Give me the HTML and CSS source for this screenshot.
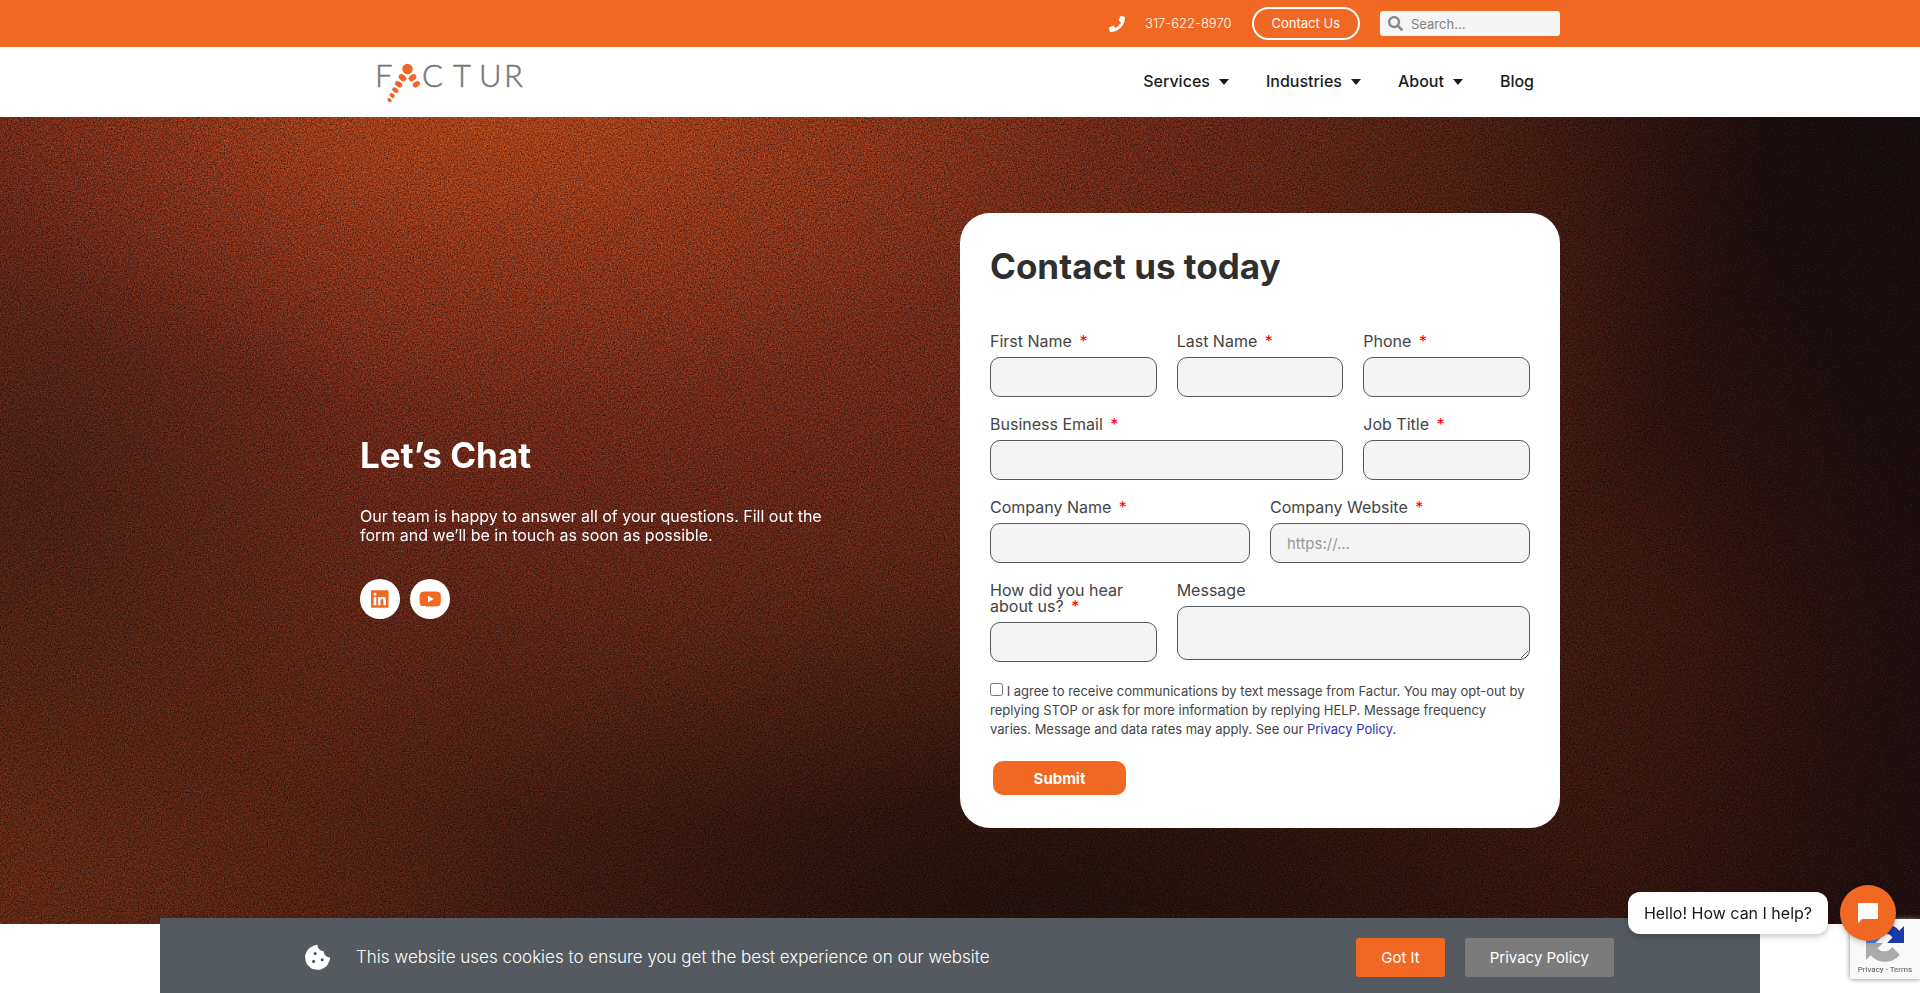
FILE: index.html
```html
<!DOCTYPE html>
<html lang="en">
<head>
<meta charset="utf-8">
<meta name="viewport" content="width=device-width, initial-scale=1">
<title>Contact Us - Factur</title>
<link rel="stylesheet" href="styles.css">
</head>
<body>
<div class="topbar">
  <div class="container topbar-inner">
    <a class="phone" href="tel:3176228970">
      <svg class="phone-icon" viewBox="0 0 512 512" aria-hidden="true"><path fill="currentColor" d="M493.4 24.6l-104-24c-11.3-2.6-22.9 3.3-27.5 13.9l-48 112c-4.2 9.8-1.4 21.3 6.9 28l60.6 49.6c-36 76.7-98.9 140.5-177.2 177.2l-49.6-60.6c-6.8-8.3-18.2-11.1-28-6.9l-112 48C3.9 366.5-2 378.1.6 389.4l24 104C27.1 504.2 36.7 512 48 512c256.1 0 464-207.5 464-464 0-11.2-7.7-20.9-18.6-23.4z"/></svg>
      <span>317-622-8970</span>
    </a>
    <a class="contact-btn" href="#contact">Contact Us</a>
    <form class="search" role="search">
      <svg class="search-icon" viewBox="0 0 512 512" aria-hidden="true"><path fill="currentColor" d="M505 442.7L405.3 343c-4.5-4.5-10.6-7-17-7H372c27.6-35.3 44-79.7 44-128C416 93.1 322.9 0 208 0S0 93.1 0 208s93.1 208 208 208c48.3 0 92.7-16.4 128-44v16.300c0 6.400 2.500 12.500 7 17l99.700 99.700c9.400 9.400 24.600 9.400 33.900 0l28.300-28.300c9.400-9.400 9.400-24.600.1-34zM208 336c-70.700 0-128-57.200-128-128 0-70.700 57.200-128 128-128 70.700 0 128 57.200 128 128 0 70.700-57.200 128-128 128z"/></svg>
      <input class="search-input" type="search" placeholder="Search..." aria-label="Search">
    </form>
  </div>
</div>

<header class="header">
  <div class="container header-inner">
    <a class="logo" href="#" aria-label="Factur">
      <svg class="logo-svg" viewBox="0 0 148 42">
        <text class="logo-text" x="-2 45 76 102 127" y="26">FCTUR</text>
        <g fill="#f06724">
          <circle cx="30.500" cy="8" r="5.200"/>
          <ellipse cx="25.500" cy="16.700" rx="4.200" ry="3" transform="rotate(35 25.500 16.700)"/>
          <ellipse cx="35.500" cy="16.700" rx="4.200" ry="3" transform="rotate(-35 35.500 16.700)"/>
          <ellipse cx="21.600" cy="23.300" rx="3.900" ry="2.700" transform="rotate(35 21.600 23.300)"/>
          <ellipse cx="39.400" cy="23.300" rx="3.900" ry="2.700" transform="rotate(-35 39.400 23.300)"/>
          <ellipse cx="18.300" cy="29.200" rx="3.400" ry="2.300" transform="rotate(35 18.300 29.200)"/>
          <ellipse cx="15.200" cy="34.500" rx="2.900" ry="2" transform="rotate(35 15.200 34.500)"/>
          <ellipse cx="12.500" cy="39.200" rx="2.400" ry="1.700" transform="rotate(35 12.500 39.200)"/>
        </g>
      </svg>
    </a>
    <nav class="nav">
      <a href="#">Services<span class="caret"></span></a>
      <a href="#">Industries<span class="caret"></span></a>
      <a href="#">About<span class="caret"></span></a>
      <a href="#">Blog</a>
    </nav>
  </div>
</header>

<main class="hero">
  <svg class="grain" aria-hidden="true">
    <filter id="grain" x="0" y="0" width="100%" height="100%" color-interpolation-filters="sRGB">
      <feTurbulence type="fractalNoise" baseFrequency="0.7" numOctaves="2" seed="4"/>
      <feColorMatrix type="matrix" values=".6 .6 0 0 -.06  .6 .6 0 0 -.06  .6 .6 0 0 -.06  0 0 0 0 1"/>
    </filter>
    <rect width="100%" height="100%" filter="url(#grain)"/>
  </svg>
  <div class="container hero-inner">
    <section class="intro">
      <h2>Let’s Chat</h2>
      <p>Our team is happy to answer all of your questions. Fill out the form and we’ll be in touch as soon as possible.</p>
      <div class="socials">
        <a href="#" aria-label="LinkedIn"><svg viewBox="0 0 448 512"><path fill="currentColor" d="M416 32H31.900C14.300 32 0 46.500 0 64.300v383.400C0 465.500 14.300 480 31.900 480H416c17.600 0 32-14.500 32-32.300V64.300c0-17.800-14.400-32.300-32-32.300zM135.400 416H69V202.200h66.500V416zm-33.200-243c-21.300 0-38.500-17.300-38.500-38.500S80.900 96 102.200 96c21.200 0 38.500 17.300 38.500 38.500 0 21.300-17.200 38.500-38.500 38.500zm282.100 243h-66.400V312c0-24.800-.5-56.700-34.500-56.700-34.600 0-39.900 27-39.900 54.900V416h-66.400V202.200h63.700v29.200h.9c8.900-16.800 30.600-34.500 62.900-34.500 67.200 0 79.700 44.300 79.700 101.900V416z"/></svg></a>
        <a href="#" aria-label="YouTube"><svg viewBox="0 0 576 512"><path fill="currentColor" d="M549.700 124.100c-6.300-23.700-24.800-42.300-48.300-48.600C458.800 64 288 64 288 64S117.200 64 74.600 75.500c-23.500 6.300-42 24.900-48.300 48.600-11.400 42.900-11.400 132.300-11.400 132.300s0 89.400 11.400 132.300c6.300 23.700 24.800 41.500 48.300 47.800C117.200 448 288 448 288 448s170.800 0 213.400-11.500c23.500-6.300 42-24.200 48.300-47.800 11.400-42.900 11.400-132.300 11.400-132.300s0-89.400-11.400-132.300zm-317.500 213.500V175.200l142.700 81.200-142.700 81.200z"/></svg></a>
      </div>
    </section>

    <section class="card" id="contact">
      <h2>Contact us today</h2>
      <form class="form">
        <div class="field third"><label for="first">First Name <span class="req">*</span></label><input id="first" type="text"></div>
        <div class="field third"><label for="last">Last Name <span class="req">*</span></label><input id="last" type="text"></div>
        <div class="field third"><label for="phone">Phone <span class="req">*</span></label><input id="phone" type="tel"></div>
        <div class="field two-thirds"><label for="email">Business Email <span class="req">*</span></label><input id="email" type="email"></div>
        <div class="field third"><label for="job">Job Title <span class="req">*</span></label><input id="job" type="text"></div>
        <div class="field half"><label for="company">Company Name <span class="req">*</span></label><input id="company" type="text"></div>
        <div class="field half"><label for="site">Company Website <span class="req">*</span></label><input id="site" type="url" placeholder="https://..."></div>
        <div class="field third"><label for="hear">How did you hear about us? <span class="req">*</span></label><input id="hear" type="text"></div>
        <div class="field two-thirds"><label for="message">Message</label><textarea id="message"></textarea></div>
        <div class="consent"><input id="agree" type="checkbox"> <label for="agree">I agree to receive communications by text message from Factur. You may opt-out by replying STOP or ask for more information by replying HELP. Message frequency varies. Message and data rates may apply. See our <a href="#">Privacy Policy.</a></label></div>
        <button class="submit" type="submit">Submit</button>
      </form>
    </section>
  </div>
</main>

<aside class="cookie" aria-label="Cookie notice">
  <svg class="cookie-icon" viewBox="0 0 512 512" aria-hidden="true"><path fill="currentColor" d="M510.500 255.900c-69.900-1.200-127-56.300-127-127-70.600-.9-127-57-127-127-27.200-4.200-54.200.1-78.700 12.500l-69.100 35.300c-24.600 12.500-44.500 32.500-57.100 57l-35.100 68.900c-12.500 24.600-17 52.500-12.700 79.800l12.200 76.500c4.300 27.300 17.100 52.400 36.600 71.900l54.800 54.600c19.500 19.500 44.600 32.200 71.800 36.500l76.400 12.100c27.200 4.300 55.200-.1 79.800-12.600l69.100-35.200c24.600-12.500 44.500-32.500 57.100-57l35.100-68.800c12.500-24.600 16.900-52.300 13.800-77.500z"/><g fill="#555a60"><circle cx="176" cy="336" r="32"/><circle cx="208" cy="176" r="32"/><circle cx="352" cy="304" r="32"/></g></svg>
  <p>This website uses cookies to ensure you get the best experience on our website</p>
  <button class="cookie-ok" type="button">Got It</button>
  <a class="cookie-policy" href="#">Privacy Policy</a>
</aside>

<div class="recaptcha">
  <svg viewBox="0 0 64 64" aria-hidden="true">
    <path fill="#1c3aa9" d="M64 31.900V3.400l-7.900 7.900A32 32 0 0 0 32 0v16.200a16 16 0 0 1 12.600 6.600L35.400 32z"/>
    <path fill="#4285f4" d="M32 0A32 32 0 0 0 7 12l12.600 13.100A16 16 0 0 1 32 16.200zM0 32h16l10-10L12 7A32 32 0 0 0 0 32z"/>
    <path fill="#ababab" d="M0 32v28.600l7.900-7.900A32 32 0 0 0 57 51.900L44 38.700a16 16 0 0 1-24.600 2.500l9.200-9.200z"/>
  </svg>
  <span>Privacy - Terms</span>
</div>

<div class="chat">
  <span class="chat-bubble">Hello! How can I help?</span>
  <button class="chat-btn" type="button" aria-label="Open chat">
    <svg viewBox="0 0 20 20" aria-hidden="true"><path fill="#fff" d="M1 0h18a1 1 0 0 1 1 1v14a1 1 0 0 1-1 1H4l-4 4V1a1 1 0 0 1 1-1z"/></svg>
  </button>
</div>
</body>
</html>
```

FILE: styles.css
```css
* { box-sizing: border-box; }

body {
  margin: 0;
  background: #fff;
  color: #2f2f2f;
  font: 16px/1.2 Inter, "Open Sans", sans-serif;
}

a { color: inherit; text-decoration: none; }
h2, p { margin: 0; }
input, textarea, button { font-family: inherit; }

.container {
  width: 100%;
  max-width: 1200px;
  margin: 0 auto;
}

/* Top bar */
.topbar { background: #f16823; color: #fff; }

.topbar-inner {
  display: flex;
  justify-content: flex-end;
  align-items: center;
  gap: 20px;
  padding: 7px 0;
}

.phone {
  display: flex;
  align-items: center;
  gap: 20px;
  font-size: 13px;
  font-weight: 300;
}

.phone-icon { width: 16px; height: 16px; }

.contact-btn {
  padding: 0 18px;
  border: 2px solid #fff;
  border-radius: 17px;
  font-size: 13px;
  line-height: 29px;
}

.search {
  display: flex;
  align-items: center;
  gap: 8px;
  width: 180px;
  height: 25px;
  padding: 0 8px;
  border-radius: 3px;
  background: #f5f5f5;
  color: #818a91;
}

.search-icon { flex: none; width: 15px; height: 15px; color: #888; }

.search-input {
  width: 100%;
  min-width: 0;
  padding: 0;
  border: 0;
  outline: 0;
  background: none;
  font-size: 13px;
}

.search-input::placeholder { color: #818181; }

/* Header */
.header { background: #fff; }

.header-inner {
  display: flex;
  justify-content: space-between;
  align-items: center;
  height: 70px;
  padding: 0 26px 0 17px;
}

.logo-svg { display: block; width: 148px; height: 42px; overflow: visible; }

.logo-text {
  fill: #77787b;
  stroke: #77787b;
  stroke-width: .5px;
  font-family: Lato, sans-serif;
  font-size: 31px;
  font-weight: 300;
}

.nav {
  display: flex;
  gap: 37px;
  color: #1c1c1c;
  font-size: 16px;
  font-weight: 500;
}

.nav a { display: flex; align-items: center; gap: 9px; }

.caret {
  border: 5px solid transparent;
  border-top: 6px solid;
  border-bottom: 0;
}

/* Hero */
.hero {
  position: relative;
  isolation: isolate;
  padding: 96px 0;
  background:
    radial-gradient(ellipse 32% 40% at 25% -4%, rgba(172, 68, 24, .8) 0%, rgba(150, 58, 24, .4) 50%, rgba(110, 42, 22, 0) 100%),
    radial-gradient(ellipse 18% 50% at 2% 46%, rgba(48, 22, 20, .55) 0%, rgba(50, 22, 18, 0) 100%),
    radial-gradient(ellipse 58% 90% at 34% -2%, #7c3018 0%, rgba(112, 42, 24, .75) 45%, rgba(64, 26, 18, 0) 100%),
    radial-gradient(ellipse 26% 70% at 0% 88%, #582410 0%, rgba(80, 32, 20, 0) 100%),
    radial-gradient(ellipse 32% 50% at 54% 106%, #1c0f0c 0%, rgba(28, 15, 12, 0) 100%),
    radial-gradient(ellipse 24% 70% at 100% 0%, #140b0c 0%, rgba(20, 11, 12, 0) 100%),
    radial-gradient(ellipse 18% 60% at 80% 62%, #3a170f 0%, rgba(50, 20, 14, 0) 100%),
    linear-gradient(90deg, #4a1c13 0%, #36170f 50%, #2a120d 80%, #1c0d0d 100%);
}

.grain {
  position: absolute;
  inset: 0;
  z-index: -1;
  width: 100%;
  height: 100%;
  mix-blend-mode: overlay;
}

.hero-inner {
  display: grid;
  grid-template-columns: 1fr 1fr;
  align-items: center;
}

.intro { color: #fff; padding: 12px 120px 0 0; }

.intro h2, .card h2 {
  font-size: 35px;
  font-weight: 700;
  line-height: 40px;
}

.intro p { margin: 32px 0 34px; line-height: 19px; }

.socials { display: flex; gap: 10px; }

.socials a {
  display: grid;
  place-items: center;
  width: 40px;
  height: 40px;
  border-radius: 50%;
  background: #fff;
  color: #f16823;
}

.socials svg { height: 20px; }

/* Form card */
.card {
  padding: 33px 30px;
  border-radius: 30px;
  background: #fff;
}

.form {
  display: grid;
  grid-template-columns: repeat(6, 1fr);
  gap: 19px 20px;
  margin-top: 47px;
}

.field {
  display: flex;
  flex-direction: column;
  gap: 8px;
  color: #444;
}

.third { grid-column: span 2; }
.half { grid-column: span 3; }
.two-thirds { grid-column: span 4; }

.field label { line-height: 16px; }
.req { margin-left: 3px; color: #f00; }

.field input, .field textarea {
  width: 100%;
  height: 40px;
  padding: 5px 16px;
  border: 1px solid #54595f;
  border-radius: 10px;
  background: #f4f4f4;
  font-size: 15px;
}

.field textarea { height: 54px; }
.field input::placeholder { color: #999; }

.consent {
  grid-column: 1 / -1;
  padding: 1px 4px 0 0;
  color: #444;
  font-size: 13px;
  line-height: 19px;
}

.consent input { width: 13px; height: 13px; margin: 0; }
.consent a { color: #3333a8; }

.submit {
  grid-column: 1 / -1;
  justify-self: start;
  width: 133px;
  height: 34px;
  margin: 3px 3px 0;
  border: 0;
  border-radius: 10px;
  background: #f16823;
  color: #fff;
  font-size: 15px;
  font-weight: 700;
}

/* Cookie notice */
.cookie {
  position: fixed;
  right: 0;
  bottom: 0;
  left: 0;
  display: flex;
  align-items: center;
  gap: 20px;
  max-width: 1600px;
  height: 75px;
  margin: 0 auto;
  padding: 4px 146px 0 145px;
  background: #555a60;
  color: #fff;
}

.cookie p { flex: 1; margin-left: 6px; font-size: 17px; font-weight: 300; }
.cookie-icon { width: 25px; height: 25px; }

.cookie-ok, .cookie-policy {
  padding: 0 25px;
  border: 0;
  border-radius: 3px;
  background: #f16823;
  color: #fff;
  font-size: 15px;
  font-weight: 400;
  line-height: 39px;
}

.cookie-policy { background: #7b7b7b; }

/* Floating widgets */
.recaptcha {
  position: fixed;
  right: 0;
  bottom: 14px;
  display: flex;
  flex-direction: column;
  align-items: center;
  justify-content: flex-end;
  gap: 3px;
  width: 70px;
  height: 60px;
  padding-bottom: 4px;
  border-radius: 2px 0 0 2px;
  background: #f9f9f9;
  box-shadow: 0 0 5px gray;
  color: #555;
  font: 8px/10px Roboto, sans-serif;
}

.recaptcha svg { width: 38px; height: 38px; }

.chat {
  position: fixed;
  right: 24px;
  bottom: 52px;
  display: flex;
  align-items: center;
  gap: 12px;
}

.chat-bubble {
  padding: 0 16px;
  border-radius: 12px;
  background: #fff;
  box-shadow: 0 2px 6px rgba(0, 0, 0, .25);
  color: #15171f;
  font-size: 16px;
  line-height: 42px;
}

.chat-btn {
  display: grid;
  place-items: center;
  width: 56px;
  height: 56px;
  padding: 0;
  border: 0;
  border-radius: 50%;
  background: #f16823;
  box-shadow: 0 1px 6px rgba(0, 0, 0, .3);
}

.chat-btn svg { width: 20px; height: 20px; }
```
